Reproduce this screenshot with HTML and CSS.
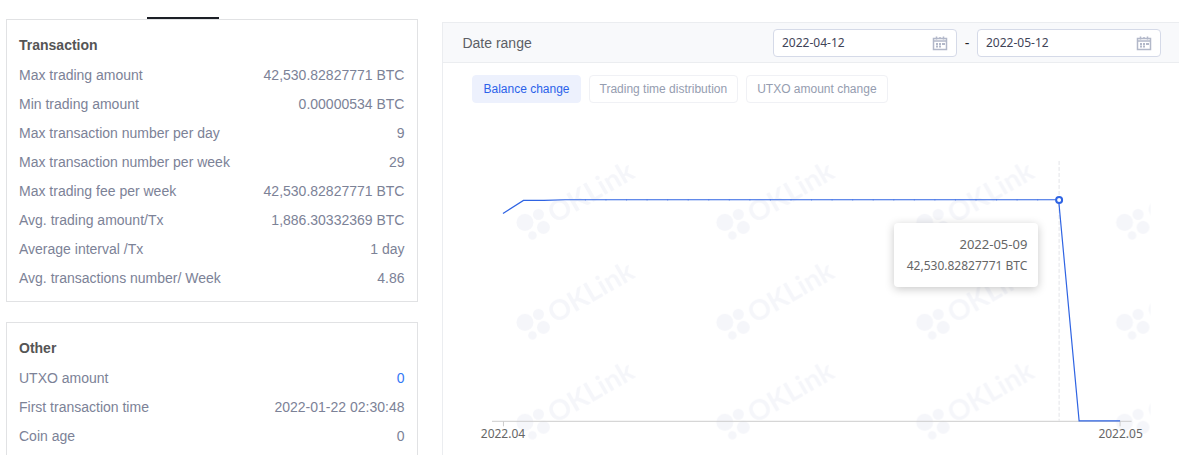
FILE: index.html
```
<!DOCTYPE html>
<html lang="en">
<head>
    <meta charset="UTF-8">
    <title>Address statistics</title>
    <link rel="stylesheet" href="styles.css">
</head>
<body>
    <main class="page">
        <div class="stats">
            <div class="tab-bar"><span class="tab-line"></span></div>

            <section class="card">
                <h3>Transaction</h3>
                <dl>
                    <div class="row"><dt>Max trading amount</dt><dd>42,530.82827771 BTC</dd></div>
                    <div class="row"><dt>Min trading amount</dt><dd>0.00000534 BTC</dd></div>
                    <div class="row"><dt>Max transaction number per day</dt><dd>9</dd></div>
                    <div class="row"><dt>Max transaction number per week</dt><dd>29</dd></div>
                    <div class="row"><dt>Max trading fee per week</dt><dd>42,530.82827771 BTC</dd></div>
                    <div class="row"><dt>Avg. trading amount/Tx</dt><dd>1,886.30332369 BTC</dd></div>
                    <div class="row"><dt>Average interval /Tx</dt><dd>1 day</dd></div>
                    <div class="row"><dt>Avg. transactions number/ Week</dt><dd>4.86</dd></div>
                </dl>
            </section>

            <section class="card card-open">
                <h3>Other</h3>
                <dl>
                    <div class="row"><dt>UTXO amount</dt><dd><a href="#utxo">0</a></dd></div>
                    <div class="row"><dt>First transaction time</dt><dd>2022-01-22 02:30:48</dd></div>
                    <div class="row"><dt>Coin age</dt><dd>0</dd></div>
                </dl>
            </section>
        </div>

        <section class="panel">
            <div class="panel-header">
                <label for="dateFrom">Date range</label>
                <div class="date-range">
                    <div class="date-field">
                        <input id="dateFrom" type="text" value="2022-04-12">
                        <svg class="calendar" viewBox="0 0 16 16" aria-hidden="true">
                            <path d="M1.5 3.5h13v11h-13zM1.5 6h13" />
                            <path d="M4.5 1.5v3M11.5 1.5v3M8 2v2" />
                            <path class="days" d="M4 9h2M7 9h2M10 9h3M4 11.5h2M7 11.5h2" />
                        </svg>
                    </div>
                    <span class="dash">-</span>
                    <div class="date-field">
                        <input id="dateTo" type="text" value="2022-05-12" aria-label="End date">
                        <svg class="calendar" viewBox="0 0 16 16" aria-hidden="true">
                            <path d="M1.5 3.5h13v11h-13zM1.5 6h13" />
                            <path d="M4.5 1.5v3M11.5 1.5v3M8 2v2" />
                            <path class="days" d="M4 9h2M7 9h2M10 9h3M4 11.5h2M7 11.5h2" />
                        </svg>
                    </div>
                </div>
            </div>

            <div class="chart-tabs">
                <button type="button" class="active">Balance change</button>
                <button type="button">Trading time distribution</button>
                <button type="button">UTXO amount change</button>
            </div>

            <div class="chart">
                <svg class="chart-svg" viewBox="0 0 736 350">
                    <defs>
                        <pattern id="watermark" x="68" y="47" width="200" height="100" patternUnits="userSpaceOnUse">
                            <circle cx="14" cy="72.5" r="8.5" />
                            <circle cx="27.5" cy="64.5" r="5.5" />
                            <circle cx="32.5" cy="77.5" r="6.5" />
                            <circle cx="21.5" cy="85.5" r="4.3" />
                            <text class="mark-text" transform="translate(44 74) rotate(-30)">OKLink</text>
                        </pattern>
                    </defs>
                    <rect x="68" y="47" width="640" height="300" fill="url(#watermark)" />

                    <!-- x axis -->
                    <path class="axis" d="M49 318.5H689M60.5 318.5v5M677.5 318.5v5" />
                    <text class="axis-label" x="60" y="335">2022.04</text>
                    <text class="axis-label" x="678" y="335">2022.05</text>

                    <!-- balance -->
                    <path class="pointer" d="M616.5 58V318" />
                    <polyline class="line" points="60,110.5 80.5,97.5 101,97.5 122,96.8 616,96.8 636.5,318 677.5,318" />
                    <path class="joints" d="M142 97H606" />
                    <circle class="point" cx="616.5" cy="97" r="3" />
                </svg>
                <div class="tooltip">
                    <div class="tooltip-date">2022-05-09</div>
                    <div>42,530.82827771 BTC</div>
                </div>
            </div>
        </section>
    </main>
</body>
</html>
```

FILE: styles.css
```
* {
    box-sizing: border-box;
}
body {
    margin: 0;
    background-color: #fff;
    font-family: "Liberation Sans", Arial, sans-serif;
    font-size: 14px;
    color: #7c8297;
}
.page {
    display: grid;
    grid-template-columns: 14fr 25fr;
    gap: 24px;
    min-height: 100vh;
    padding-left: 6px;
}

/* left column */
.stats {
    display: flex;
    flex-direction: column;
}
.tab-bar {
    display: flex;
    align-items: flex-end;
    height: 19px;
    padding-left: 141px;
}
.tab-line {
    width: 72px;
    height: 2px;
    background-color: #1c1f26;
}
.card {
    padding: 11px 13px 8px 12px;
    border: 1px solid #e1e2e4;
}
.card-open {
    flex: 1;
    margin-top: 20px;
    padding-bottom: 0;
    border-bottom: none;
}
.card h3 {
    margin: 0 0 1px;
    font-size: 14px;
    line-height: 29px;
    color: #555;
}
.card dl {
    margin: 0;
}
.row {
    display: flex;
    justify-content: space-between;
    line-height: 29px;
}
.row dd {
    margin: 0;
}
.row a {
    color: #3478f6;
    text-decoration: none;
}

/* right column */
.panel {
    margin-top: 22px;
    border-top: 1px solid #ebedf0;
    border-left: 1px solid #ebedf0;
}
.panel-header {
    display: flex;
    justify-content: space-between;
    align-items: center;
    height: 40px;
    padding: 0 18px 0 19px;
    background-color: #f8f9fb;
    border-bottom: 1px solid #ebedf0;
    color: #5c5f66;
}
.date-range {
    display: flex;
    align-items: center;
}
.date-field {
    display: flex;
    align-items: center;
    width: 184px;
    height: 28px;
    padding: 0 8px;
    background-color: #fff;
    border: 1px solid #d5dae8;
    border-radius: 4px;
}
.date-field input {
    flex: 1;
    min-width: 0;
    padding: 0;
    border: none;
    outline: none;
    background: none;
    font-family: "Noto Sans", sans-serif;
    font-size: 12px;
    color: #3f4459;
}
.calendar {
    width: 16px;
    height: 16px;
    fill: none;
    stroke: #b2b8c9;
    stroke-width: 1.5;
}
.calendar .days {
    stroke-width: 1.8;
}
.dash {
    width: 20px;
    text-align: center;
    color: #222;
}
.chart-tabs {
    display: flex;
    gap: 8px;
    padding: 12px 29px 0;
}
.chart-tabs button {
    height: 28px;
    padding: 0 10px;
    border: 1px solid #f0f1f5;
    border-radius: 4px;
    background-color: #fff;
    font-family: inherit;
    font-size: 12px;
    color: #959db0;
    cursor: pointer;
}
.chart-tabs button.active {
    border-color: #edf1fd;
    background-color: #edf1fd;
    color: #2b62ea;
}

/* chart */
.chart {
    position: relative;
    font-family: "Noto Sans", sans-serif;
    font-size: 12px;
}
.chart-svg {
    display: block;
    width: 100%;
    height: auto;
}
#watermark {
    fill: #f5f6fa;
}
.mark-text {
    font-family: Lato, sans-serif;
    font-size: 28px;
    font-weight: 700;
}
.axis {
    fill: none;
    stroke: #ccc;
}
.axis-label {
    fill: #666;
    text-anchor: middle;
}
.pointer {
    stroke: #e3e4e8;
    stroke-dasharray: 4 2;
}
.line {
    fill: none;
    stroke: #2f64e3;
    stroke-width: 1.2;
}
.joints {
    stroke: #2f64e3;
    stroke-opacity: 0.3;
    stroke-width: 2;
    stroke-dasharray: 1 19.57;
}
.point {
    fill: #fff;
    stroke: #2f64e3;
    stroke-width: 2;
}
.tooltip {
    position: absolute;
    top: 34.3%;
    left: 61.3%;
    min-width: 144px;
    padding: 11px;
    border-radius: 4px;
    background-color: #fff;
    box-shadow: 0 2px 10px rgba(0, 0, 0, 0.22);
    line-height: 21px;
    text-align: right;
    white-space: nowrap;
    color: #666;
}
.tooltip-date {
    font-size: 13px;
}
```
